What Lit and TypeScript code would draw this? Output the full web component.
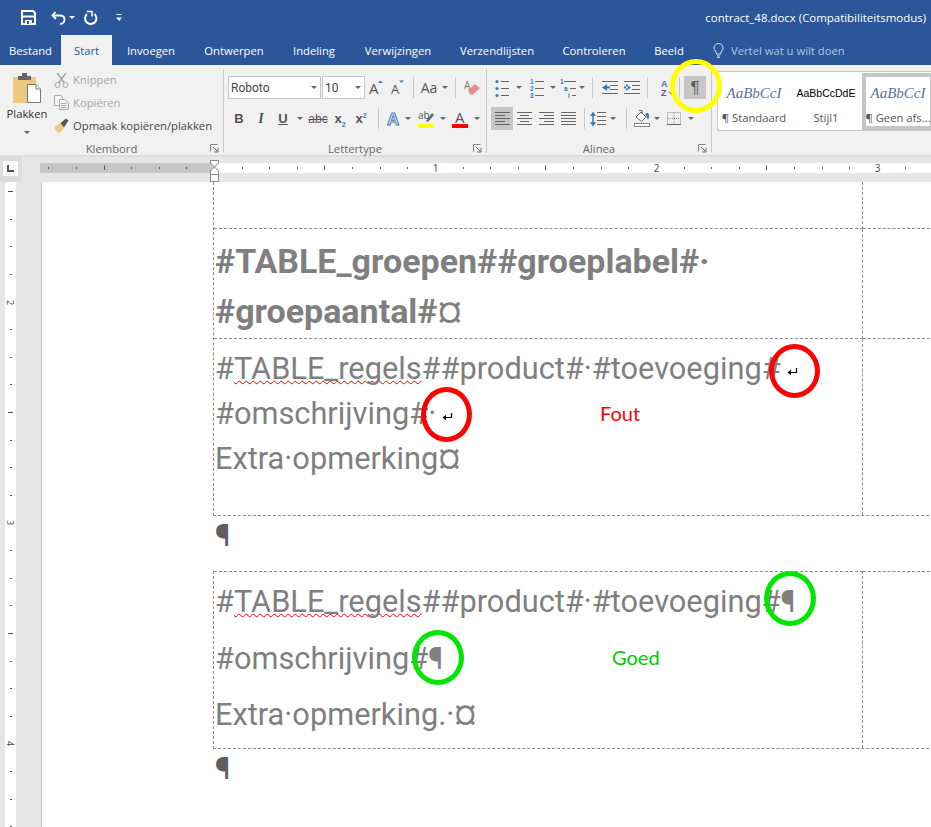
import { LitElement, css, html, svg } from "lit";
import { customElement } from "lit/decorators.js";

const TABS: [string, number][] = [
  ["Bestand", 61],
  ["Start", 51],
  ["Invoegen", 78],
  ["Ontwerpen", 88],
  ["Indeling", 72],
  ["Verwijzingen", 96],
  ["Verzendlijsten", 102],
  ["Controleren", 92],
  ["Beeld", 58],
];

const BLUE = "#3c78b5";

const icon = (w: number, h: number, body: unknown) =>
  html`<svg width=${w} height=${h} viewBox="0 0 ${w} ${h}" fill="none">${body}</svg>`;

const caret = html`<span class="caret"></span>`;

// lines for the alinea buttons, x1/x2 per row
const lines = (rows: [number, number][], color = "#666", step = 3, top = 2) =>
  rows.map(
    ([a, b], i) =>
      svg`<path d="M${a} ${top + i * step + 0.5}H${b}" stroke=${color}/>`
  );

// tick positions along a ruler: every eighth of an inch from the zero point
const ticks = (zero: number, from: number, to: number) => {
  const out: { pos: number; kind: number; n: number }[] = [];
  for (let i = Math.ceil((from - zero) / 27.62); zero + i * 27.62 < to; i++) {
    const kind = ((i % 8) + 8) % 8;
    out.push({ pos: Math.round(zero + i * 27.62) + 0.5, kind, n: i / 8 });
  }
  return out;
};

const MARKS = [
  { x: 670, y: 59, w: 52, h: 54, c: "#ffff00" },
  { x: 769, y: 344, w: 51, h: 54, c: "#ff0000" },
  { x: 421, y: 387, w: 51, h: 55, c: "#ff0000" },
  { x: 764, y: 571, w: 52, h: 55, c: "#00e600" },
  { x: 412, y: 630, w: 52, h: 55, c: "#00e600" },
];

const softReturn = html`<svg class="soft" width="11" height="9" viewBox="0 0 11 9">
  <path d="M9.5 1V5.5H2.5" stroke="#000" fill="none" stroke-width="1.2" />
  <path d="M0.5 5.5L4 2.8V8.2Z" fill="#000" />
</svg>`;

@customElement("app-root")
export class AppRoot extends LitElement {
  static styles = css`
    :host {
      display: block;
      position: relative;
      width: 931px;
      height: 827px;
      overflow: hidden;
      background: #e6e6e6;
      font-family: "Open Sans", "Noto Sans", sans-serif;
      font-size: 11.25px;
      color: #444;
    }
    svg {
      display: block;
      flex: none;
      overflow: visible;
    }

    /* title bar and tabs */
    .chrome {
      height: 65px;
      background: #2b579a;
      color: #fff;
      display: flex;
      flex-direction: column;
    }
    .qat {
      height: 35px;
      display: flex;
      align-items: center;
      padding-left: 21px;
      box-sizing: border-box;
    }
    .qat .undo {
      margin-left: 15px;
    }
    .qat .undo-caret {
      margin-left: 3px;
      border-top-color: #fff;
    }
    .qat .redo {
      margin-left: 9px;
    }
    .qat .more {
      margin-left: 18px;
    }
    .title {
      margin-left: auto;
      padding-right: 5px;
      font-size: 11.45px;
      white-space: nowrap;
    }
    .tabs {
      height: 30px;
      display: flex;
    }
    .tab {
      display: flex;
      align-items: center;
      justify-content: center;
      padding-top: 1px;
      box-sizing: border-box;
      white-space: nowrap;
    }
    .tab.on {
      background: #f1f1f1;
      color: #2b579a;
    }
    .tell {
      display: flex;
      align-items: center;
      gap: 7px;
      padding-left: 15px;
      color: #b4c5de;
    }

    /* ribbon */
    .ribbon {
      height: 92px;
      box-sizing: border-box;
      background: #f1f1f1;
      border-bottom: 2px solid #dcdcdc;
      display: flex;
    }
    .group {
      height: 84px;
      margin-top: 4px;
      position: relative;
      border-right: 1px solid #c6c6c6;
      box-sizing: border-box;
    }
    .clip {
      width: 224px;
      display: flex;
    }
    .font {
      width: 263px;
      padding: 7px 0 0 4px;
    }
    .para {
      width: 225px;
      padding: 7px 0 0 4px;
    }
    .label {
      position: absolute;
      left: 0;
      right: 0;
      bottom: -4px;
      height: 16px;
      line-height: 16px;
      text-align: center;
      color: #666;
    }
    .launch {
      position: absolute;
      right: 4px;
      bottom: 0;
    }
    .caret {
      display: block;
      width: 0;
      height: 0;
      border: 3px solid transparent;
      border-top: 3px solid #666;
      border-bottom: 0;
    }
    .paste {
      width: 54px;
      display: flex;
      flex-direction: column;
      align-items: center;
      padding-top: 4px;
    }
    .paste span.t {
      margin-top: 3px;
      color: #333;
      line-height: 16px;
    }
    .paste .caret {
      margin-top: 9px;
    }
    .small {
      display: flex;
      flex-direction: column;
      margin-top: -1px;
    }
    .small div {
      height: 23px;
      display: flex;
      align-items: center;
      gap: 4px;
      white-space: nowrap;
    }
    .small .off {
      color: #a6a6a6;
    }
    .row {
      display: flex;
      align-items: center;
      height: 23px;
    }
    .cell {
      display: flex;
      align-items: center;
      justify-content: center;
      height: 23px;
      flex: none;
    }
    .cell.end {
      justify-content: flex-end;
    }
    .sep {
      width: 1px;
      height: 21px;
      background: #c6c6c6;
    }
    .w6 { width: 6px; } .w8 { width: 8px; } .w10 { width: 10px; }
    .w12 { width: 12px; } .w14 { width: 14px; } .w16 { width: 16px; }
    .w18 { width: 18px; } .w20 { width: 20px; } .w22 { width: 22px; }
    .w24 { width: 24px; } .w26 { width: 26px; }
    .font .row + .row {
      margin-top: 8px;
    }
    .para .row + .row {
      margin-top: 8px;
    }
    .box {
      height: 23px;
      box-sizing: border-box;
      border: 1px solid #c6c6c6;
      background: #fff;
      display: flex;
      align-items: center;
      justify-content: space-between;
      padding: 0 3px 0 2px;
      font-family: Roboto, sans-serif;
      font-size: 12px;
      color: #444;
    }
    .box.name {
      width: 93px;
    }
    .box.size {
      width: 43px;
      margin-left: 1px;
    }
    .aa {
      font-size: 14px;
      color: #555;
    }
    .glyph {
      font-family: "Liberation Sans", sans-serif;
      font-size: 13px;
      font-weight: 700;
      color: #555;
    }
    .glyph.it {
      font-family: "Liberation Serif", serif;
      font-style: italic;
      font-size: 14px;
    }
    .glyph.u {
      text-decoration: underline;
    }
    .glyph.thin {
      font-weight: 400;
      font-size: 12px;
      text-decoration: line-through;
    }
    .glyph sub,
    .glyph sup {
      font-size: 7px;
      color: #3c78b5;
      line-height: 0;
    }
    .cell.active {
      background: #c6c6c6;
    }
    .pilbtn {
      margin-left: 1px;
    }
    .pil {
      font-family: "Liberation Sans", sans-serif;
      font-size: 17px;
      color: #5a5a5a;
    }

    /* styles gallery */
    .gallery {
      margin: 6px 0 0 5px;
      width: 214px;
      height: 60px;
      box-sizing: border-box;
      background: #fff;
      border: 1px solid #c6c6c6;
      border-right: 0;
      display: flex;
      overflow: hidden;
    }
    .style {
      width: 72px;
      flex: none;
      display: flex;
      flex-direction: column;
      align-items: center;
      box-sizing: border-box;
      white-space: nowrap;
    }
    .style.on {
      border: 4px solid #c6c6c6;
      height: 57px;
      margin-top: 1px;
    }
    .style .s {
      height: 33px;
      padding-top: 13px;
      box-sizing: border-box;
      font-family: "Liberation Serif", serif;
      font-style: italic;
      font-size: 15px;
      line-height: 17px;
      color: #5a7497;
    }
    .style.on .s {
      height: 28px;
      padding-top: 8px;
    }
    .style .s.plain {
      font-family: "Liberation Sans", sans-serif;
      font-style: normal;
      font-size: 10.5px;
      color: #000;
    }
    .style .n {
      line-height: 16px;
      margin-top: 5px;
      color: #555;
    }

    /* rulers */
    .rulers {
      height: 25px;
      display: flex;
      background: #e6e6e6;
    }
    .corner {
      width: 22px;
      height: 25px;
      box-sizing: border-box;
      background: #dcdcdc;
      padding: 4px 3px;
    }
    .corner div {
      width: 15px;
      height: 15px;
      background: #f8f8f8;
      display: flex;
      align-items: center;
      justify-content: center;
    }
    .hruler {
      margin: 6px 0 0 18px;
    }

    /* document */
    .doc {
      display: flex;
      height: 645px;
    }
    .vruler {
      margin-left: 5px;
      width: 11px;
      background: #fff;
      flex: none;
    }
    .page {
      margin-left: 25px;
      flex: 1;
      background: #fff;
      border-left: 1px solid #c6c6c6;
      padding-left: 171px;
      overflow: hidden;
      font-family: Roboto, sans-serif;
      font-size: 30.75px;
      color: #7f7f7f;
      white-space: nowrap;
    }
    .tbl {
      display: grid;
      grid-template-columns: 649px 1fr;
      border-left: 1px dashed #8c8c8c;
      border-bottom: 1px dashed #8c8c8c;
      width: 760px;
    }
    .c {
      box-sizing: border-box;
      padding-left: 1px;
      border-right: 1px dashed #8c8c8c;
      border-top: 1px dashed #8c8c8c;
    }
    .c.last {
      border-right: 0;
    }
    .tbl.one .c {
      border-top: 0;
    }
    .tbl.one .h0 {
      height: 47px;
      border-bottom: 1px dashed #8c8c8c;
    }
    .tbl.one .h1 {
      height: 110px;
      border-bottom: 1px dashed #8c8c8c;
      padding-top: 7px;
      font-size: 34px;
      line-height: 50px;
      font-weight: 700;
    }
    .tbl.one .h1 i {
      font-style: normal;
      font-weight: 400;
    }
    .tbl.one .h2 {
      height: 176px;
      padding-top: 7px;
      line-height: 45px;
    }
    .tbl.two .h3 {
      height: 177px;
      padding-top: 2px;
      line-height: 56.5px;
    }
    .c div {
      display: flex;
      align-items: center;
    }
    .sq {
      text-decoration: underline wavy #f00 1px;
      text-underline-offset: 1px;
      text-decoration-skip-ink: none;
    }
    .soft {
      margin: 5px 0 0 0;
    }
    .gap1 {
      width: 6px;
    }
    .gap2 {
      width: 6px;
    }
    .pf {
      height: 55px;
      padding-left: 2px;
      font-size: 32px;
      line-height: 38px;
      color: #5f5f5f;
    }

    /* annotations drawn over the shot */
    .ring {
      position: absolute;
      box-sizing: border-box;
      border: 5px solid;
      border-radius: 50%;
    }
    .note {
      position: absolute;
      font-family: Lato, sans-serif;
      font-size: 20px;
      line-height: 24px;
    }
    .note.fout {
      left: 600px;
      top: 401px;
      color: #f00;
    }
    .note.goed {
      left: 612px;
      top: 645px;
      color: #00cc00;
    }
    .indent {
      position: absolute;
      left: 210px;
      top: 160px;
    }
  `;

  render() {
    return html`
      ${this.renderChrome()}
      <div class="ribbon">
        ${this.renderClipboard()} ${this.renderFont()} ${this.renderParagraph()}
        <div class="gallery">
          <div class="style"><span class="s">AaBbCcI</span><span class="n">¶ Standaard</span></div>
          <div class="style"><span class="s plain">AaBbCcDdE</span><span class="n">Stijl1</span></div>
          <div class="style on"><span class="s">AaBbCcI</span><span class="n">¶ Geen afs...</span></div>
        </div>
      </div>
      ${this.renderRulers()} ${this.renderDoc()}
      ${MARKS.map(
        (m) =>
          html`<div
            class="ring"
            style="left:${m.x}px;top:${m.y}px;width:${m.w}px;height:${m.h}px;border-color:${m.c}"
          ></div>`
      )}
      <div class="note fout">Fout</div>
      <div class="note goed">Goed</div>
    `;
  }

  private renderChrome() {
    return html`<div class="chrome">
      <div class="qat">
        ${icon(15, 15, svg`<path d="M1 1H12L14 3V14H1Z" stroke="#fff" stroke-width="2" fill="#2b579a"/><rect x="4" y="2" width="7" height="3" fill="#2b579a"/><path d="M2 6.5H13" stroke="#fff" stroke-width="2"/><rect x="4" y="10" width="7" height="4" fill="#fff"/><rect x="6" y="11" width="2" height="3" fill="#2b579a"/>`)}
        <span class="undo">${icon(15, 14, svg`<path d="M4.5 1L1.5 4.5L5 8M2 4.5H9C12 4.5 13.5 6.5 13.5 8.5C13.5 11 11.5 13 9 13" stroke="#fff" stroke-width="1.8"/>`)}</span>
        <span class="caret undo-caret"></span>
        <span class="redo">${icon(14, 15, svg`<path d="M3 4A5.7 5.7 0 1 0 10.5 4" stroke="#fff" stroke-width="2"/><path d="M3 1.5H8V6.5" stroke="#fff" stroke-width="1.6"/>`)}</span>
        <span class="more">${icon(6, 8, svg`<path d="M0.5 0.5H5.5" stroke="#fff"/><path d="M0 3.5H6L3 7Z" fill="#fff"/>`)}</span>
        <span class="title">contract_48.docx (Compatibiliteitsmodus)</span>
      </div>
      <div class="tabs">
        ${TABS.map(
          ([t, w]) =>
            html`<div class="tab ${t === "Start" ? "on" : ""}" style="width:${w}px">${t}</div>`
        )}
        <div class="tell">
          ${icon(11, 15, svg`<path d="M3.5 11C3.5 8.5 1 7.5 1 5A4.5 4.5 0 0 1 10 5C10 7.5 7.5 8.5 7.5 11ZM4 13H7M4.5 14.5H6.5" stroke="#dfe6f1"/>`)}
          Vertel wat u wilt doen
        </div>
      </div>
    </div>`;
  }

  private renderClipboard() {
    return html`<div class="group clip">
      <div class="paste">
        ${icon(28, 30, svg`
          <rect x="0" y="4" width="23" height="26" rx="1" fill="#edc87e"/>
          <path d="M5 7V3H9V0H14V3H18V7Z" fill="#666"/>
          <path d="M14.5 11.5H23L27.5 16V29.5H14.5Z" fill="#fff" stroke="#777"/>
          <path d="M23 11.5V16H27.5" fill="#fff" stroke="#777"/>`)}
        <span class="t">Plakken</span>
        ${caret}
      </div>
      <div class="small">
        <div class="off">
          ${icon(15, 16, svg`<path d="M3 1L10.5 11M12 1L4.5 11" stroke="#a6a6a6" stroke-width="1.5"/><circle cx="3.5" cy="13" r="2.5" stroke="#a6a6a6"/><circle cx="11.5" cy="13" r="2.5" stroke="#a6a6a6"/>`)}
          Knippen
        </div>
        <div class="off">
          ${icon(15, 15, svg`<path d="M0.5 0.5H6.5L8.5 2.5V10.5H0.5Z" fill="#f8f8f8" stroke="#a6a6a6"/><path d="M5.5 4.5H11L14.5 8V14.5H5.5Z" fill="#f8f8f8" stroke="#a6a6a6"/><path d="M7 8.5H12.5M7 10.5H12.5M7 12.5H12.5" stroke="#a6a6a6"/>`)}
          Kopiëren
        </div>
        <div>
          ${icon(15, 15, svg`<path d="M0.5 9L6 5L10 10L6 14.5C3 14.5 1 12 0.5 9Z" fill="#edc87e"/><path d="M6.5 5L12 0.5L14.5 2.5L10 9.5Z" fill="#555"/>`)}
          Opmaak kopiëren/plakken
        </div>
      </div>
      <div class="label">Klembord</div>
      ${this.launcher()}
    </div>`;
  }

  private launcher() {
    return html`<span class="launch">${icon(9, 9, svg`<path d="M0.5 7.5V0.5H7.5" stroke="#888"/><path d="M3 3L7 7M8 4V8H4" stroke="#666"/>`)}</span>`;
  }

  private renderFont() {
    const a = (arrow: string, size: number) =>
      icon(16, 16, svg`<text x="1" y="14" font-family="Open Sans" font-size=${size} fill="#555">A</text><path d=${arrow} fill=${BLUE}/>`);
    return html`<div class="group font">
      <div class="row">
        <div class="box name"><span>Roboto</span>${caret}</div>
        <div class="box size"><span>10</span>${caret}</div>
        <div class="cell w22">${a("M10 3L12.5 0.5L15 3Z", 15)}</div>
        <div class="cell w22">${a("M9 0.5H14L11.5 3Z", 13)}</div>
        <div class="cell w8"><span class="sep"></span></div>
        <div class="cell w24 aa">Aa</div>
        <div class="cell w8">${caret}</div>
        <div class="cell w12"><span class="sep"></span></div>
        <div class="cell w22">
          ${icon(17, 17, svg`<text x="0" y="10" font-family="Open Sans" font-size="10" fill="#777">A</text><path d="M4 11L11 5L16 9L9 15.5H6Z" fill="#e98a94"/>`)}
        </div>
      </div>
      <div class="row">
        <div class="cell w22"><span class="glyph">B</span></div>
        <div class="cell w22"><span class="glyph it">I</span></div>
        <div class="cell w22"><span class="glyph u">U</span></div>
        <div class="cell w12">${caret}</div>
        <div class="cell w24"><span class="glyph thin">abc</span></div>
        <div class="cell w20"><span class="glyph">x<sub>2</sub></span></div>
        <div class="cell w22"><span class="glyph">x<sup>2</sup></span></div>
        <div class="cell w12"><span class="sep"></span></div>
        <div class="cell w18">
          ${icon(17, 17, svg`<text x="2" y="15" font-family="Liberation Sans" font-weight="700" font-size="17" fill="#dbe8f6" stroke="#3c78b5" stroke-width="0.9">A</text>`)}
        </div>
        <div class="cell w12">${caret}</div>
        <div class="cell w24">
          ${icon(16, 18, svg`<text x="0" y="9" font-family="Open Sans" font-size="10" fill="#555">ab</text><path d="M8 11L14 3L16 5L10 12Z" fill="#666"/><rect y="14" width="16" height="4" fill="#ffff00"/>`)}
        </div>
        <div class="cell w10">${caret}</div>
        <div class="cell w24">
          ${icon(16, 18, svg`<text x="3" y="13" font-family="Open Sans" font-size="15" fill="#555">A</text><rect y="14" width="16" height="4" fill="#ff0000"/>`)}
        </div>
        <div class="cell w10">${caret}</div>
      </div>
      <div class="label">Lettertype</div>
      ${this.launcher()}
    </div>`;
  }

  private renderParagraph() {
    const num = (x: number, y: number, t: string) =>
      svg`<text x=${x} y=${y} font-family="Liberation Sans" font-weight="700" font-size="6.5" fill=${BLUE}>${t}</text>`;
    const dot = (y: number) => svg`<circle cx="2" cy=${y} r="1.6" fill=${BLUE}/>`;
    const al = (rows: [number, number][]) =>
      icon(15, 14, lines(rows, "#666", 3, 0));
    return html`<div class="group para">
      <div class="row">
        <div class="cell w22">
          ${icon(15, 18, [dot(2.5), dot(9.5), dot(16.5), ...lines([[6, 14], [6, 14], [6, 14]], "#666", 7, 2)])}
        </div>
        <div class="cell w12">${caret}</div>
        <div class="cell w24">
          ${icon(15, 18, [num(0, 5, "1"), num(0, 12, "2"), num(0, 19, "3"), ...lines([[5, 14], [5, 14], [5, 14]], "#666", 7, 2)])}
        </div>
        <div class="cell w8">${caret}</div>
        <div class="cell w22">
          ${icon(17, 18, [num(0, 5, "1"), num(4, 12, "a"), num(8, 19, "i"), ...lines([[4, 16], [10, 16], [12, 16]], "#666", 7, 2)])}
        </div>
        <div class="cell w6">${caret}</div>
        <div class="cell w14"><span class="sep"></span></div>
        <div class="cell w22">
          ${icon(16, 13, [...lines([[0, 16], [8, 16], [8, 16], [0, 16]], "#666", 4, 0), svg`<path d="M0 6.5L5 3V10Z M4 5.5H8V7.5H4Z" fill=${BLUE}/>`])}
        </div>
        <div class="cell w22">
          ${icon(16, 13, [...lines([[0, 16], [8, 16], [8, 16], [0, 16]], "#666", 4, 0), svg`<path d="M7 6.5L2 3V10Z M0 5.5H4V7.5H0Z" fill=${BLUE}/>`])}
        </div>
        <div class="cell w8"><span class="sep"></span></div>
        <div class="cell w24 end">
          ${icon(14, 17, svg`<text x="0" y="8" font-family="Liberation Sans" font-size="9" font-weight="700" fill=${BLUE}>A</text><text x="0" y="16.5" font-family="Liberation Sans" font-size="9" font-weight="700" fill="#7a4a9a">Z</text><path d="M10.5 1V15M8 12.5L10.5 15.5L13 12.5" stroke="#666"/>`)}
        </div>
        <div class="cell w8"><span class="sep"></span></div>
        <div class="cell w22 active pilbtn"><span class="pil">¶</span></div>
      </div>
      <div class="row">
        <div class="cell w22 active">${al([[0, 15], [0, 10], [0, 15], [0, 10], [0, 15]])}</div>
        <div class="cell w22">${al([[0, 15], [3, 12], [0, 15], [3, 12], [0, 15]])}</div>
        <div class="cell w22">${al([[0, 15], [5, 15], [0, 15], [5, 15], [0, 15]])}</div>
        <div class="cell w22">${al([[0, 15], [0, 15], [0, 15], [0, 15], [0, 15]])}</div>
        <div class="cell w10"><span class="sep"></span></div>
        <div class="cell w18">
          ${icon(16, 16, [...lines([[7, 16], [7, 16], [7, 16], [7, 16]], "#666", 4, 1), svg`<path d="M3 2V14" stroke=${BLUE} stroke-width="1.5"/><path d="M0 5L3 0.5L6 5ZM0 11L3 15.5L6 11Z" fill=${BLUE}/>`])}
        </div>
        <div class="cell w12">${caret}</div>
        <div class="cell w14"><span class="sep"></span></div>
        <div class="cell w18">
          ${icon(16, 17, svg`<path d="M2 7L7 2L12 7L7.5 11.5Z" fill="#fff" stroke="#666"/><path d="M5 0.5H8V4" stroke="#666"/><path d="M11.5 3H14C15.5 5 15.5 8 14 9.5C13 8 12.5 6 11.5 5Z" fill=${BLUE}/><rect x="0.5" y="13.5" width="15" height="3" fill="#fff" stroke="#888"/>`)}
        </div>
        <div class="cell w12">${caret}</div>
        <div class="cell w22">
          ${icon(14, 13, svg`<rect x="0.5" y="0.5" width="13" height="12" stroke="#888" stroke-dasharray="1 1"/><path d="M7 1V12M1 6.5H13" stroke="#888" stroke-dasharray="1 1"/><path d="M0 12.5H14" stroke="#666"/>`)}
        </div>
        <div class="cell w12">${caret}</div>
      </div>
      <div class="label">Alinea</div>
      ${this.launcher()}
    </div>`;
  }

  private renderRulers() {
    return html`<div class="rulers">
      <div class="corner">
        <div>${icon(7, 7, svg`<path d="M1 0V6H7" stroke="#555" stroke-width="2"/>`)}</div>
      </div>
      <svg class="hruler" width="891" height="10" viewBox="40 0 891 10">
        <rect x="40" width="174" height="10" fill="#c6c6c6" />
        <rect x="214" width="717" height="10" fill="#fff" />
        ${ticks(214, 42, 931).map((t) =>
          t.kind === 0
            ? t.n > 0
              ? svg`<text x=${t.pos} y="9" text-anchor="middle" font-family="Open Sans" font-size="10" fill="#444">${t.n}</text>`
              : ""
            : t.kind === 4
            ? svg`<path d="M${t.pos} 2.5V7" stroke="#555"/>`
            : svg`<path d="M${t.pos} 4V6" stroke="#555"/>`
        )}
      </svg>
      <svg class="indent" width="9" height="22" viewBox="0 0 9 22">
        <path d="M0.5 0.5H8.5V3L4.5 7L8.5 11V21.5H0.5V11L4.5 7L0.5 3Z" fill="#fff" stroke="#888" />
        <path d="M0.5 14.5H8.5" stroke="#888" />
      </svg>
    </div>`;
  }

  private renderDoc() {
    return html`<div class="doc">
      <svg class="vruler" width="11" height="645" viewBox="0 182 11 645">
        ${ticks(301.5, 183, 827).map((t) =>
          t.kind === 0
            ? svg`<text x="0" y="0" transform="translate(2 ${t.pos}) rotate(90)" text-anchor="middle" font-family="Open Sans" font-size="9" fill="#444">${t.n + 2}</text>`
            : t.kind === 4
            ? svg`<path d="M3 ${t.pos}H8" stroke="#555"/>`
            : svg`<path d="M5 ${t.pos}H7" stroke="#555"/>`
        )}
      </svg>
      <div class="page">
        <div class="tbl one">
          <div class="c h0"></div>
          <div class="c last h0"></div>
          <div class="c h1">
            #TABLE_groepen##groeplabel#·<br />#groepaantal#<i>¤</i>
          </div>
          <div class="c last h1"></div>
          <div class="c h2">
            <div>#<span class="sq">TABLE_regels</span>##product#·#toevoeging#<span class="gap1"></span>${softReturn}</div>
            <div>#omschrijving#·<span class="gap2"></span>${softReturn}</div>
            <div>Extra·opmerking¤</div>
          </div>
          <div class="c last h2"></div>
        </div>
        <div class="pf">¶</div>
        <div class="tbl two">
          <div class="c h3">
            <div>#<span class="sq">TABLE_regels</span>##product#·#toevoeging#¶</div>
            <div>#omschrijving#¶</div>
            <div>Extra·opmerking.·¤</div>
          </div>
          <div class="c last h3"></div>
        </div>
        <div class="pf">¶</div>
      </div>
    </div>`;
  }
}
